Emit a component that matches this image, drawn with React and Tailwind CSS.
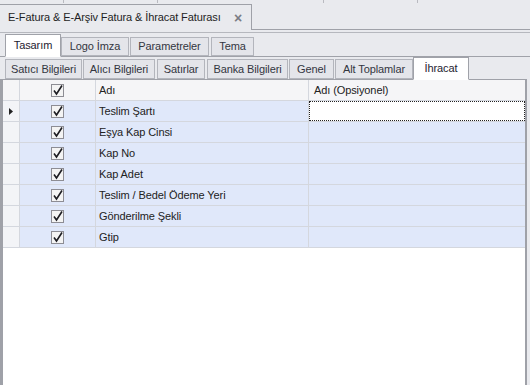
const rows = [
  'Teslim Şartı',
  'Eşya Kap Cinsi',
  'Kap No',
  'Kap Adet',
  'Teslim / Bedel Ödeme Yeri',
  'Gönderilme Şekli',
  'Gtip',
]

const topTabs = [
  { label: 'Tasarım', w: 56, ml: 5, active: true },
  { label: 'Logo İmza', w: 68, ml: 0 },
  { label: 'Parametreler', w: 79, ml: 1 },
  { label: 'Tema', w: 43, ml: 2 },
]

const subTabs = [
  { label: 'Satıcı Bilgileri', w: 77, ml: 5 },
  { label: 'Alıcı Bilgileri', w: 72, ml: 1 },
  { label: 'Satırlar', w: 48, ml: 2 },
  { label: 'Banka Bilgileri', w: 81, ml: 2 },
  { label: 'Genel', w: 45, ml: 1 },
  { label: 'Alt Toplamlar', w: 78, ml: 1 },
  { label: 'İhracat', w: 56, ml: 0, active: true },
]

const Check = () => (
  <svg width="13" height="13" viewBox="0 0 13 13" className="block">
    <rect x="0.5" y="0.5" width="12" height="12" fill="#f4f4f4" stroke="#8d8d94" />
    <path d="M3 6.5 L5.5 10 L11 1.5" fill="none" stroke="#1d1d22" strokeWidth="1.6" />
  </svg>
)

const Tab = ({ label, w, ml, active, small }) => (
  <div
    style={{ width: w, marginLeft: ml }}
    className={
      active
        ? (small ? 'h-[23px] mt-0' : 'h-[23px] mt-[1px]') +
          ' -mb-px flex items-center justify-center bg-white border border-[#a0a2a9] border-b-white z-10'
        : (small ? 'h-[20px] mt-[2px]' : 'h-[19px] mt-[4px]') +
          ' flex items-center justify-center bg-[#e4e5ea] border border-[#b3b5bc]'
    }
  >
    <span className={active ? 'text-[#1e2230]' : 'text-[#33363f]'}>{label}</span>
  </div>
)

export default function App() {
  return (
    <div className="w-[530px] h-[385px] bg-[#e9eaee] overflow-hidden whitespace-nowrap text-[11px] tracking-[-0.1px] text-[#222] font-['Liberation_Sans',Arial,sans-serif] flex flex-col">
      <div className="h-[3px] flex">
        <div className="w-[64px] border-r border-[#b9bac0]" />
        <div className="w-[94px] border-r border-[#b9bac0]" />
        <div className="w-[166px] border-r border-[#b9bac0]" />
        <div className="w-[94px] border-r border-[#b9bac0]" />
      </div>

      <div className="h-[27px] flex border-b border-[#9fa1a8]">
        <div className="w-[252px] mt-[1px] -mb-px border-t border-r border-[#9fa1a8] bg-[#e9eaee] flex items-center pl-[8px] pr-[9px]">
          <span className="flex-1 text-[#1e1e24]">E-Fatura &amp; E-Arşiv Fatura &amp; İhracat Faturası</span>
          <span className="text-[#7b7c85] text-[14px] font-bold leading-none">×</span>
        </div>
      </div>

      <div className="h-[2px]" />
      <div className="flex-1 border-t border-[#b6b8be] flex flex-col">
        <div className="flex h-[24px] border-b border-[#a0a2a9]">
          {topTabs.map(t => (
            <Tab key={t.label} {...t} />
          ))}
        </div>
        <div className="flex h-[22px]">
          {subTabs.map(t => (
            <Tab key={t.label} {...t} small />
          ))}
        </div>

        <div className="flex-1 mr-[3px] border-l-[3px] border-r-[2px] border-t border-[#9fa1a8] bg-white flex flex-col">
          <div className="h-[21px] flex bg-[#f5f5f7] border-b border-[#d4d7de]">
            <div className="w-[17px] border-r border-[#d4d7de]" />
            <div className="w-[76px] border-r border-[#d4d7de] flex items-center justify-center">
              <Check />
            </div>
            <div className="w-[213px] border-r border-[#d4d7de] flex items-center pl-[3px]">Adı</div>
            <div className="flex-1 flex items-center pl-[5px]">Adı (Opsiyonel)</div>
          </div>
          {rows.map((r, i) => (
            <div key={r} className="h-[21px] flex border-b border-[#d4d7de]">
              <div className="w-[17px] bg-[#f3f4f7] border-r border-[#d4d7de] flex items-center justify-center">
                {i === 0 && (
                  <svg width="4" height="7" viewBox="0 0 4 7">
                    <path d="M0 0 L4 3.5 L0 7 Z" fill="#222" />
                  </svg>
                )}
              </div>
              <div className="w-[76px] bg-[#e0e8fa] border-r border-[#d4d7de] flex items-center justify-center">
                <Check />
              </div>
              <div className="w-[213px] bg-[#e0e8fa] border-r border-[#d4d7de] flex items-center pl-[3px]">{r}</div>
              <div className="flex-1 bg-[#e0e8fa] flex">
                {i === 0 && <div className="flex-1 bg-white border border-dotted border-[#222]" />}
              </div>
            </div>
          ))}
        </div>
      </div>
    </div>
  )
}
